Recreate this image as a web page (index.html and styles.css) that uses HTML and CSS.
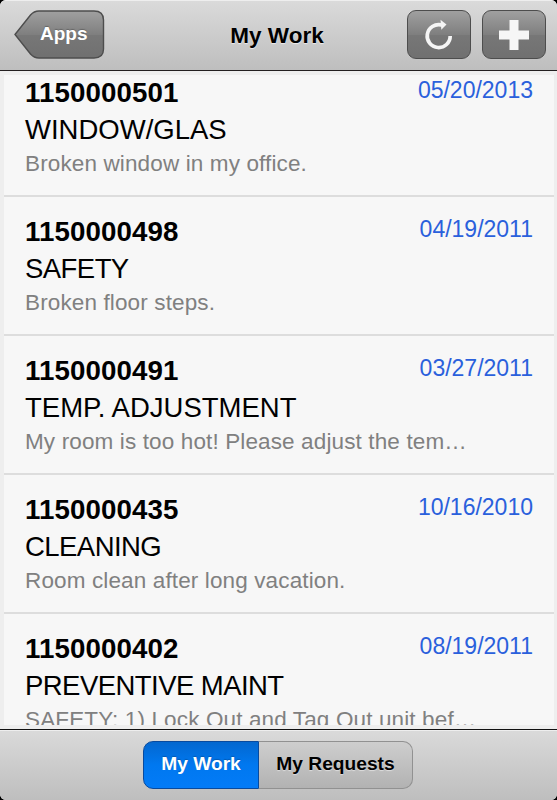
FILE: index.html
```html
<!DOCTYPE html>
<html lang="en">
<head>
    <meta charset="UTF-8">
    <meta name="viewport" content="width=device-width, initial-scale=1.0">
    <title>My Work</title>
    <link rel="stylesheet" href="styles.css">
</head>
<body>
    <div class="app">
        <header class="header">
            <button class="back-btn" type="button">
                <svg class="back-shape" width="92" height="50" viewBox="0 0 92 50">
                    <defs>
                        <linearGradient id="backFill" x1="0" y1="0" x2="0" y2="1">
                            <stop offset="0" stop-color="#a0a0a0"/>
                            <stop offset="0.5" stop-color="#7f7f7f"/>
                            <stop offset="0.51" stop-color="#777"/>
                            <stop offset="1" stop-color="#707070"/>
                        </linearGradient>
                    </defs>
                    <path d="M1 24.5 L16.5 5 Q20 1 25 1 H80 Q89.500 1 89.500 10 V39 Q89.500 48 80 48 H25 Q20 48 16.500 44 Z" fill="url(#backFill)" stroke="#4d4d4d" stroke-width="1.4"/>
                </svg>
                <span class="back-label">Apps</span>
            </button>
            <h1 class="title">My Work</h1>
            <div class="actions">
                <button class="icon-btn" type="button" aria-label="Refresh">
                    <svg width="30" height="32" viewBox="0 0 30 32">
                        <path d="M26.200 17 A11.500 11.500 0 1 1 17.500 5.900" fill="none" stroke="#f5f5f5" stroke-width="3.700"/>
                        <path d="M16.500 0.800 L22.500 5.500 L17.300 10.800 Z" fill="#f5f5f5"/>
                    </svg>
                </button>
                <button class="icon-btn" type="button" aria-label="Add">
                    <svg width="30" height="30" viewBox="0 0 30 30">
                        <path d="M10.5 0 H19.5 V10.5 H30 V19.5 H19.5 V30 H10.5 V19.5 H0 V10.5 H10.5 Z" fill="#f6f6f6"/>
                    </svg>
                </button>
            </div>
        </header>

        <main class="content">
            <ul class="list">
                <li class="item">
                    <div class="item-head">
                        <span class="number">1150000501</span>
                        <span class="date">05/20/2013</span>
                    </div>
                    <div class="category loose">WINDOW/GLAS</div>
                    <div class="desc">Broken window in my office.</div>
                </li>
                <li class="item">
                    <div class="item-head">
                        <span class="number">1150000498</span>
                        <span class="date">04/19/2011</span>
                    </div>
                    <div class="category">SAFETY</div>
                    <div class="desc">Broken floor steps.</div>
                </li>
                <li class="item">
                    <div class="item-head">
                        <span class="number">1150000491</span>
                        <span class="date">03/27/2011</span>
                    </div>
                    <div class="category loose">TEMP. ADJUSTMENT</div>
                    <div class="desc">My room is too hot! Please adjust the tem…</div>
                </li>
                <li class="item">
                    <div class="item-head">
                        <span class="number">1150000435</span>
                        <span class="date">10/16/2010</span>
                    </div>
                    <div class="category">CLEANING</div>
                    <div class="desc">Room clean after long vacation.</div>
                </li>
                <li class="item">
                    <div class="item-head">
                        <span class="number">1150000402</span>
                        <span class="date">08/19/2011</span>
                    </div>
                    <div class="category">PREVENTIVE MAINT</div>
                    <div class="desc">SAFETY: 1) Lock Out and Tag Out unit bef…</div>
                </li>
            </ul>
        </main>

        <footer class="footer">
            <div class="tabs">
                <button class="tab active" type="button">My Work</button>
                <button class="tab" type="button">My Requests</button>
            </div>
        </footer>
    </div>
</body>
</html>
```
FILE: styles.css
```css
* {
    margin: 0;
    padding: 0;
    box-sizing: border-box;
}

body {
    height: 100vh;
    background: #000;
    font-family: "Liberation Sans", Arial, sans-serif;
    overflow: hidden;
}

.app {
    height: 800px;
    display: flex;
    flex-direction: column;
    border-radius: 6px;
    overflow: hidden;
    background: #eeeeee;
}

button {
    font-family: inherit;
    border: none;
    background: none;
}

/* top bar */
.header {
    flex: none;
    height: 71px;
    padding: 0 11px 0 14px;
    display: grid;
    grid-template-columns: 150px 1fr 156px;
    align-items: start;
    background: linear-gradient(#dadada, #bebebe);
    border-top: 1px solid #eeeeee;
    border-bottom: 1px solid #231f20;
}

.back-btn {
    display: grid;
    width: 92px;
    height: 50px;
    margin-top: 9px;
}

.back-shape,
.back-label {
    grid-area: 1 / 1;
}

.back-label {
    padding: 12px 0 0 26px;
    text-align: left;
    font-size: 19px;
    line-height: 24px;
    font-weight: bold;
    color: #fff;
    text-shadow: 0 -1px 1px #666;
}

.title {
    padding-top: 21px;
    text-align: center;
    font-size: 22.5px;
    line-height: 28px;
    color: #000;
    text-shadow: 0 1px 1px #eee;
}

.actions {
    display: flex;
    justify-content: flex-end;
    gap: 11px;
    margin-top: 9px;
}

.icon-btn {
    width: 64px;
    height: 49px;
    display: flex;
    justify-content: center;
    align-items: center;
    border: 1.5px solid #4d4d4d;
    border-radius: 9px;
    background: linear-gradient(#a0a0a0, #7f7f7f 50%, #777 51%, #707070);
}

/* work list */
.content {
    flex: none;
    height: 650px;
    margin: 4px 3px 0 4px;
    overflow: hidden;
    background: #f7f7f7;
}

.list {
    list-style: none;
    margin-top: -17px;
}

.item {
    height: 139px;
    padding: 17px 21px 0;
    border-bottom: 2px solid #dddddd;
    white-space: nowrap;
}

.item-head {
    display: flex;
    justify-content: space-between;
    height: 37px;
}

.number {
    font-size: 27.7px;
    line-height: 36px;
    font-weight: bold;
    letter-spacing: 0.1px;
}

.date {
    padding-top: 1px;
    font-size: 23px;
    line-height: 28px;
    color: #2a60dc;
}

.category {
    font-size: 27.5px;
    line-height: 36px;
    letter-spacing: -0.55px;
    color: #000;
}

.category.loose {
    letter-spacing: 0;
}

.desc {
    font-size: 22.5px;
    line-height: 31px;
    letter-spacing: 0.13px;
    color: #808080;
}

/* bottom bar */
.footer {
    flex: none;
    height: 71px;
    margin-top: 4px;
    padding: 11px 1px 0 0;
    display: flex;
    justify-content: center;
    align-items: flex-start;
    background: linear-gradient(#dadada, #bebebe);
    border-top: 1px solid #111;
    box-shadow: inset 0 1px #eeeeee;
}

.tabs {
    display: flex;
    width: 270px;
    height: 48px;
}

.tab {
    width: 154px;
    padding-bottom: 2px;
    border: 1px solid #919191;
    border-left: none;
    border-radius: 0 10px 10px 0;
    background: linear-gradient(#cecece, #b2b2b2);
    font-size: 19.2px;
    font-weight: bold;
    color: #000;
    text-shadow: 0 1px 1px #ddd;
}

.tab.active {
    width: 116px;
    border: 1px solid #084a9e;
    border-radius: 10px 0 0 10px;
    background: linear-gradient(#0367cf, #0078f0 50%, #037bf7);
    color: #fff;
    text-shadow: 0 -1px 1px #0359b3;
}
```
